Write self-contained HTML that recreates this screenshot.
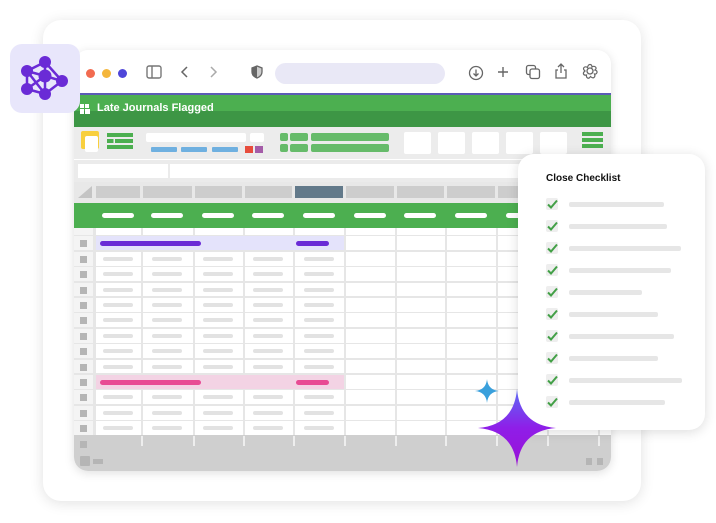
<!DOCTYPE html>
<html><head><meta charset="utf-8"><style>
*{margin:0;padding:0;box-sizing:border-box}
body{width:716px;height:523px;background:#fff;position:relative;overflow:hidden;font-family:"Liberation Sans",sans-serif}
.abs{position:absolute}
.card{left:43px;top:20px;width:598px;height:481px;background:#fff;border-radius:18px;box-shadow:0 2px 14px rgba(0,0,0,.12)}
.win{left:74px;top:50px;width:537px;height:421px;background:#fff;border-radius:14px;box-shadow:0 2px 10px rgba(0,0,0,.13);overflow:hidden}
.dot{width:9px;height:9px;border-radius:50%;top:19px}
.pill{height:4px;border-radius:2px;background:#e3e3e3}
</style></head><body>
<div class="abs card"></div>
<div class="abs win">
  <div class="abs dot" style="left:12px;background:#f26b50"></div>
  <div class="abs dot" style="left:28px;background:#f4b63c"></div>
  <div class="abs dot" style="left:44px;background:#4f46d9"></div>
  <svg class="abs" style="left:72px;top:15px" width="16" height="14" viewBox="0 0 16 14"><rect x="1" y="1" width="14" height="12" rx="2" fill="none" stroke="#777" stroke-width="1.4"/><line x1="6" y1="1" x2="6" y2="13" stroke="#777" stroke-width="1.4"/></svg>
  <svg class="abs" style="left:106px;top:16px" width="10" height="12"><path d="M7 1L2 6l5 5" fill="none" stroke="#666" stroke-width="1.5"/></svg>
  <svg class="abs" style="left:134px;top:16px" width="10" height="12"><path d="M3 1l5 5-5 5" fill="none" stroke="#aaa" stroke-width="1.5"/></svg>
  <svg class="abs" style="left:177px;top:15px" width="12" height="14"><path d="M6 1L1 3v4c0 3 2.5 5 5 6 2.5-1 5-3 5-6V3z" fill="#ccc" stroke="#666" stroke-width="1.3"/><path d="M6 1v12c-2.5-1-5-3-5-6V3z" fill="#666"/></svg>
  <div class="abs" style="left:201px;top:13px;width:170px;height:21px;border-radius:11px;background:#e9e8f6"></div>
  <svg class="abs" style="left:394px;top:15px" width="16" height="16"><circle cx="8" cy="8" r="6.5" fill="none" stroke="#666" stroke-width="1.3"/><path d="M8 4.5v6M5.5 8.5L8 11l2.5-2.5" fill="none" stroke="#666" stroke-width="1.3"/></svg>
  <svg class="abs" style="left:422px;top:15px" width="14" height="14"><path d="M7 2v10M2 7h10" stroke="#666" stroke-width="1.4"/></svg>
  <svg class="abs" style="left:451px;top:14px" width="16" height="16"><rect x="1.5" y="1.5" width="9" height="9" rx="2" fill="none" stroke="#666" stroke-width="1.3"/><rect x="5" y="5" width="9.5" height="9.5" rx="2" fill="#fff" stroke="#666" stroke-width="1.3"/></svg>
  <svg class="abs" style="left:480px;top:12px" width="14" height="18"><path d="M7 11V2M4 5l3-3 3 3M4 8H2v8h10V8h-2" fill="none" stroke="#666" stroke-width="1.3"/></svg>
  <svg class="abs" style="left:508px;top:13px" width="16" height="16"><circle cx="8" cy="8" r="3" fill="none" stroke="#666" stroke-width="1.3"/><path d="M8 1.5c2 0 2 2.5 2 2.5s2-1.5 3.5 0-0.5 3-0.5 3 2.5.5 2 2.5-2.5 1.5-2.5 1.5 1 2.5-.5 3.5-3.5-1-3.5-1-1.5 2.5-3 1.5-1-3-1-3-2.5.5-3-1 1.5-3 1.5-3S0.5 6 2 4.5s3.5 0 3.5 0S6 1.5 8 1.5z" fill="none" stroke="#666" stroke-width="1.2"/></svg>
  <div class="abs" style="left:0;top:43px;width:537px;height:3px;background:#5b5bb5"></div>
  <div class="abs" style="left:0;top:45px;width:537px;height:32px;background:linear-gradient(#4caf50 0 50%,#3d9645 50%)"></div>
  <div class="abs" style="left:6px;top:54px;width:4px;height:4px;background:#fff"></div>
  <div class="abs" style="left:11px;top:54px;width:4px;height:4px;background:#fff"></div>
  <div class="abs" style="left:6px;top:59px;width:4px;height:5px;background:#fff"></div>
  <div class="abs" style="left:11px;top:59px;width:5px;height:5px;background:#fff"></div>
  <div class="abs" style="left:23px;top:52px;color:#fff;font-weight:bold;font-size:11px">Late Journals Flagged</div>
  <div class="abs" style="left:0;top:77px;width:537px;height:32px;background:#ececec"></div>
  <div class="abs" style="left:7px;top:81px;width:18px;height:18px;background:#f8cf3e;border-radius:2px"></div>
  <div class="abs" style="left:11px;top:86px;width:13px;height:16px;background:#fff;border-radius:2px"></div>
  <div class="abs" style="left:33px;top:83px;width:26px;height:4px;background:#4caf50"></div>
  <div class="abs" style="left:33px;top:89px;width:26px;height:4px;background:linear-gradient(90deg,#4caf50 0 25%,#ececec 25% 30%,#4caf50 30%)"></div>
  <div class="abs" style="left:33px;top:95px;width:26px;height:4px;background:#4caf50"></div>
  <div class="abs" style="left:72px;top:83px;width:100px;height:9px;background:#fff;border-radius:2px"></div>
  <div class="abs" style="left:176px;top:83px;width:14px;height:9px;background:#fff;border-radius:2px"></div>
  <div class="abs" style="left:77px;top:97px;width:26px;height:5px;background:#6fb0e0;border-radius:1px"></div>
  <div class="abs" style="left:107px;top:97px;width:26px;height:5px;background:#6fb0e0;border-radius:1px"></div>
  <div class="abs" style="left:138px;top:97px;width:26px;height:5px;background:#6fb0e0;border-radius:1px"></div>
  <div class="abs" style="left:171px;top:96px;width:8px;height:7px;background:#e74c3c"></div>
  <div class="abs" style="left:181px;top:96px;width:8px;height:7px;background:#a45ca8"></div>
  <div class="abs" style="left:206px;top:83px;width:8px;height:8px;background:#66bb6a;border-radius:2px"></div>
  <div class="abs" style="left:216px;top:83px;width:18px;height:8px;background:#66bb6a;border-radius:2px"></div>
  <div class="abs" style="left:237px;top:83px;width:78px;height:8px;background:#66bb6a;border-radius:2px"></div>
  <div class="abs" style="left:206px;top:94px;width:8px;height:8px;background:#66bb6a;border-radius:2px"></div>
  <div class="abs" style="left:216px;top:94px;width:18px;height:8px;background:#66bb6a;border-radius:2px"></div>
  <div class="abs" style="left:237px;top:94px;width:78px;height:8px;background:#66bb6a;border-radius:2px"></div>
  <div class="abs" style="left:330px;top:82px;width:27px;height:22px;background:#fff;border-radius:2px"></div>
  <div class="abs" style="left:364px;top:82px;width:27px;height:22px;background:#fff;border-radius:2px"></div>
  <div class="abs" style="left:398px;top:82px;width:27px;height:22px;background:#fff;border-radius:2px"></div>
  <div class="abs" style="left:432px;top:82px;width:27px;height:22px;background:#fff;border-radius:2px"></div>
  <div class="abs" style="left:466px;top:82px;width:27px;height:22px;background:#fff;border-radius:2px"></div>
  <div class="abs" style="left:508px;top:82px;width:21px;height:4px;background:#4caf50"></div>
  <div class="abs" style="left:508px;top:88px;width:21px;height:4px;background:#4caf50"></div>
  <div class="abs" style="left:508px;top:94px;width:21px;height:4px;background:#4caf50"></div>
  <div class="abs" style="left:0;top:109px;width:537px;height:23px;background:#fff"></div>
  <div class="abs" style="left:0;top:110px;width:537px;height:22px;background:#ebebeb"></div>
  <div class="abs" style="left:4px;top:114px;width:90px;height:14px;background:#fff"></div>
  <div class="abs" style="left:96px;top:114px;width:441px;height:14px;background:#fff"></div>
  <div class="abs" style="left:0;top:132px;width:537px;height:21px;background:#e8e8e8"></div>
  <div id="colh"></div>
  <div class="abs" style="left:0;top:153px;width:537px;height:25px;background:#4caf50"></div>
  <div id="gh"></div>
  <div class="abs" style="left:0;top:178px;width:537px;height:207px;background:#e6e6e6"></div>
  <div id="grid"></div>
  <div class="abs" style="left:0;top:385px;width:537px;height:36px;background:#cfcfcf"></div>
  <div id="foot"></div>
</div>
<div class="abs" style="left:10px;top:44px;width:70px;height:69px;background:#e8e6fb;border-radius:12px"></div>
<svg class="abs" style="left:18px;top:52px" width="54" height="54" viewBox="0 0 54 54">
<g stroke="#6a2bd6" stroke-width="2.5" fill="none"><path d="M9 19L27 10 27 24 44 29 27 42 9 37 9 19 27 24M27 10L44 29M9 37L27 24 27 42M9 19L27 42"/></g>
<g fill="#6a2bd6"><circle cx="27" cy="10" r="6"/><circle cx="9" cy="19" r="6"/><circle cx="27" cy="24" r="6.5"/><circle cx="44" cy="29" r="6"/><circle cx="9" cy="37" r="6"/><circle cx="27" cy="42" r="6"/></g>
</svg>
<div class="abs" style="left:518px;top:154px;width:187px;height:276px;background:#fff;border-radius:16px;box-shadow:0 2px 12px rgba(0,0,0,.14)"></div>
<div class="abs" style="left:546px;top:173px;font-size:10px;font-weight:bold;color:#111">Close Checklist</div>
<div id="chk"></div>
<svg class="abs" style="left:474px;top:378px" width="26" height="26" viewBox="0 0 26 26"><path d="M13 1Q14 12 25 13Q14 14 13 25Q12 14 1 13Q12 12 13 1Z" fill="#3aa0dc"/></svg>
<svg class="abs" style="left:477px;top:388px" width="80" height="80" viewBox="0 0 80 80"><defs><linearGradient id="g" x1="0" y1="0" x2="0" y2="1"><stop offset="0" stop-color="#5b6cf5"/><stop offset=".5" stop-color="#8f1ee8"/><stop offset="1" stop-color="#9a10d6"/></linearGradient></defs><path d="M40 1Q43 37 79 40Q43 43 40 79Q37 43 1 40Q37 37 40 1Z" fill="url(#g)"/></svg>
<script>
(function(){
var cols=[20,67,119,169,219,270,321,371,422,473,524,537];
var h='';
h+='<div class="abs" style="left:4px;top:136px;width:14px;height:12px;background:#c4c4c4;clip-path:polygon(100% 0,100% 100%,0 100%)"></div>';
for(var i=0;i<10;i++){var x=cols[i]+2,w=cols[i+1]-cols[i]-3;h+='<div class="abs" style="left:'+x+'px;top:136px;width:'+w+'px;height:12px;background:'+(i==4?'#62798a':'#cdcdcd')+'"></div>';}
document.getElementById('colh').innerHTML=h;
h='';for(var i=0;i<9;i++){var cx=(cols[i]+cols[i+1])/2;h+='<div class="abs" style="left:'+(cx-16)+'px;top:163px;width:32px;height:5px;border-radius:3px;background:#fff"></div>';}
document.getElementById('gh').innerHTML=h;
h='';var rh=15.4;
for(var r=0;r<14;r++){var y=178+(r-1)*rh+8.3;var ty=y,hh=rh-1.5;if(r==0){ty=178;hh=6.5;}
 h+='<div class="abs" style="left:0;top:'+ty+'px;width:19px;height:'+hh+'px;background:#f4f4f4"></div>';
 if(r>0)h+='<div class="abs" style="left:6px;top:'+(y+4)+'px;width:7px;height:7px;background:#b5b5b5"></div>';
 for(var c=0;c<11;c++){var bg='#fff';var hl=(r==1||r==10)&&c<5;if(r==1&&c<5)bg='#e4e3fb';if(r==10&&c<5)bg='#f3d3e4';
  var x=cols[c]+1.5;var w=cols[c+1]-cols[c]-2;
  if(hl){x=cols[c]+1.5;w=cols[c+1]-cols[c]+(c<4?0.5:-2);}
  h+='<div class="abs" style="left:'+x+'px;top:'+ty+'px;width:'+w+'px;height:'+hh+'px;background:'+bg+'"></div>';}
 if(r==1||r==10){var col=r==1?'#6a2bd6':'#e84b94';h+='<div class="abs" style="left:26px;top:'+(y+5)+'px;width:101px;height:5px;border-radius:3px;background:'+col+'"></div><div class="abs" style="left:222px;top:'+(y+5)+'px;width:33px;height:5px;border-radius:3px;background:'+col+'"></div>';}
 else if(r>0){for(var c=0;c<5;c++){var cx=(cols[c]+cols[c+1])/2;h+='<div class="abs pill" style="left:'+(cx-15)+'px;top:'+(y+5)+'px;width:30px;background:#e2e2e2"></div>';}}
}
document.getElementById('grid').innerHTML=h;
h='<div class="abs" style="left:6px;top:391px;width:7px;height:7px;background:#b5b5b5"></div>';
for(var c=1;c<11;c++)h+='<div class="abs" style="left:'+(cols[c])+'px;top:386px;width:2px;height:10px;background:#eee"></div>';
h+='<div class="abs" style="left:6px;top:406px;width:10px;height:10px;background:#b5b5b5;border-radius:1px"></div><div class="abs" style="left:19px;top:409px;width:10px;height:5px;background:#b5b5b5"></div>';
h+='<div class="abs" style="left:512px;top:408px;width:6px;height:7px;background:#b5b5b5"></div><div class="abs" style="left:523px;top:408px;width:6px;height:7px;background:#b5b5b5"></div>';
document.getElementById('foot').innerHTML=h;
h='';var ws=[95,98,112,102,73,89,105,89,113,96];
for(var i=0;i<10;i++){var y=204+i*22;h+='<div class="abs" style="left:546px;top:'+(y-6)+'px;width:12px;height:12px;background:#eee;border-radius:2px"></div><svg class="abs" style="left:546px;top:'+(y-6)+'px" width="12" height="12"><path d="M2 6.5l3 3 6-7" fill="none" stroke="#43a047" stroke-width="2"/></svg><div class="abs pill" style="left:569px;top:'+(y-2)+'px;width:'+ws[i]+'px;height:5px;background:#e6e6e6"></div>';}
document.getElementById('chk').innerHTML=h;
})();
</script>
</body></html>
